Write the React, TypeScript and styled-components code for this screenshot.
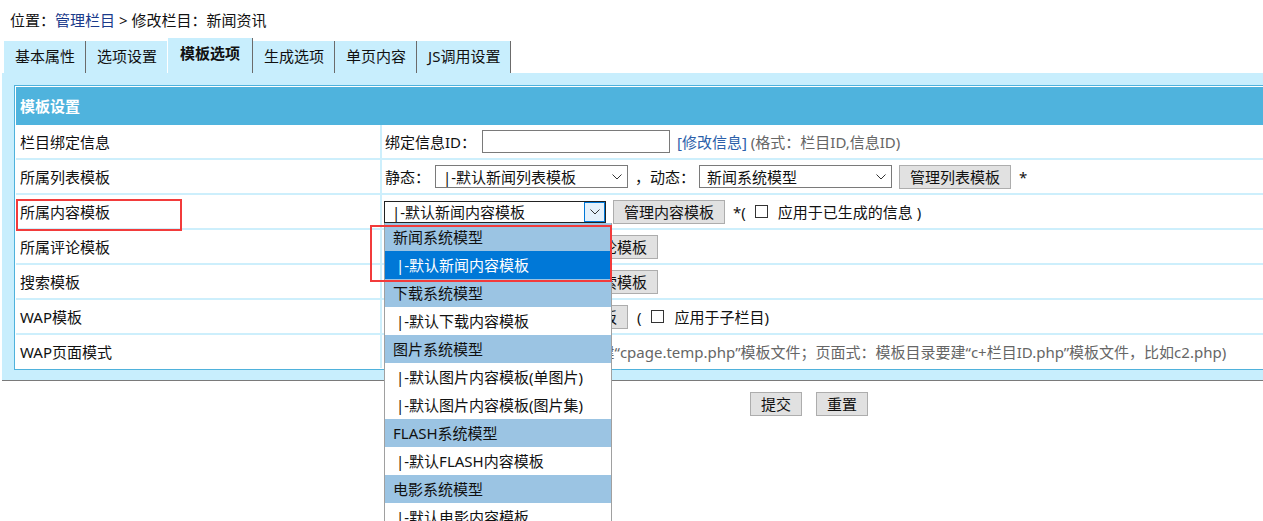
import React from 'react';
import styled, { createGlobalStyle } from 'styled-components';

const GlobalStyle = createGlobalStyle`
  html, body {
    margin: 0;
    padding: 0;
    background: #fff;
    overflow: hidden;
  }
  body {
    font-family: "Noto Sans", "Noto Sans CJK SC", sans-serif;
    font-size: 15px;
    color: #111;
  }
`;

const LIGHT = '#c8eefd';

// Page shell
const Page = styled.div`
  width: 1618px;
  height: 521px;
  overflow: hidden;
`;

const Breadcrumb = styled.div`
  box-sizing: border-box;
  height: 38px;
  padding: 10px 0 0 10px;
  line-height: 20px;
`;

const CrumbLink = styled.a`
  color: #1a3a8a;
  text-decoration: none;
`;

const TabBar = styled.div`
  display: flex;
  align-items: flex-end;
  height: 35px;
  padding-left: 4px;
`;

const Tab = styled.div<{ $active?: boolean }>`
  height: ${p => (p.$active ? 35 : 32)}px;
  line-height: 30px;
  padding: 0 ${p => (p.$active ? 12 : 10)}px;
  background: ${LIGHT};
  border-left: 1px solid ${p => (p.$active ? '#fff' : 'transparent')};
  border-right: 1px solid #6b6b6b;
  margin-left: ${p => (p.$active ? -1 : 0)}px;
  font-weight: ${p => (p.$active ? 700 : 400)};
  box-sizing: border-box;
  white-space: nowrap;
`;

const Panel = styled.div`
  margin-left: 2px;
  padding: 12px 0 10px 12px;
  background: ${LIGHT};
  border-bottom: 1px solid #7a7a7a;
`;

const Table = styled.div`
  border: 1px solid #4fb2dc;
  background: #fff;
  padding: 1px;
`;

const Header = styled.div`
  height: 38px;
  line-height: 38px;
  padding-left: 4px;
  background: #4fb3dd;
  color: #fff;
  font-weight: 700;
`;

const Row = styled.div<{ $first?: boolean }>`
  display: grid;
  grid-template-columns: 364px 1fr;
  column-gap: 2px;
  height: 33px;
  background: #cdeffc;
  border-top: ${p => (p.$first ? 'none' : '2px solid #cdeffc')};
`;

const LabelCell = styled.div`
  position: relative;
  display: flex;
  align-items: center;
  padding-left: 4px;
  background: #fff;
`;

const ValueCell = styled.div`
  position: relative;
  display: flex;
  align-items: center;
  padding-left: 3px;
  background: #fff;
  white-space: nowrap;
`;

// Form controls
const TextInput = styled.div`
  width: 188px;
  height: 23px;
  margin-left: 6px;
  box-sizing: border-box;
  border: 1px solid #7a7a7a;
  background: #fff;
`;

const SelectWrap = styled.div<{ $ml?: number }>`
  position: relative;
  margin-left: ${p => p.$ml ?? 0}px;
`;

const SelectBox = styled.div<{ $w: number; $focused?: boolean }>`
  display: flex;
  align-items: center;
  width: ${p => p.$w}px;
  height: ${p => (p.$focused ? 22 : 23)}px;
  box-sizing: border-box;
  border: 1px solid ${p => (p.$focused ? '#222' : '#7a7a7a')};
  background: #fff;
`;

const SelectText = styled.span`
  flex: 1;
  padding-left: 7px;
  overflow: hidden;
  line-height: 20px;
`;

const Arrow = styled.span<{ $focused?: boolean }>`
  display: flex;
  align-items: center;
  justify-content: center;
  width: 21px;
  height: 100%;
  box-sizing: border-box;
  border: 1px solid ${p => (p.$focused ? '#0078d7' : 'transparent')};
  background: ${p => (p.$focused ? '#e5f1fb' : 'transparent')};
`;

const Button = styled.button<{ $ml?: number }>`
  height: 24px;
  margin-left: ${p => p.$ml ?? 0}px;
  padding: 0 10px;
  box-sizing: border-box;
  border: 1px solid #adadad;
  background: #e1e1e1;
  color: #111;
  font: inherit;
  line-height: 22px;
`;

const Check = styled.span<{ $ml: number }>`
  display: inline-block;
  width: 13px;
  height: 13px;
  margin-left: ${p => p.$ml}px;
  box-sizing: border-box;
  border: 1px solid #333;
  background: #fff;
`;

const Txt = styled.span<{ $ml?: number }>`
  margin-left: ${p => p.$ml ?? 0}px;
`;

const EditLink = styled.a`
  margin-left: 7px;
  color: #2b5faa;
  text-decoration: none;
`;

const Hint = styled.span`
  color: #666;
`;

// Open dropdown list
const Dropdown = styled.div`
  position: absolute;
  top: 100%;
  left: 0;
  z-index: 5;
  width: 228px;
  box-sizing: border-box;
  border: 1px solid #a0a0a0;
  border-top: none;
  background: #fff;
`;

const DropItem = styled.div<{ $kind: 'group' | 'option' | 'selected' }>`
  height: 28px;
  line-height: 28px;
  padding-left: ${p => (p.$kind === 'group' ? 8 : 11)}px;
  background: ${p =>
    p.$kind === 'group' ? '#9bc4e3' : p.$kind === 'selected' ? '#0078d7' : '#fff'};
  color: ${p => (p.$kind === 'selected' ? '#fff' : '#111')};
  white-space: nowrap;
`;

// Red annotation frames
const LabelMark = styled.div`
  position: absolute;
  left: 0;
  top: 4px;
  width: 166px;
  height: 32px;
  box-sizing: border-box;
  border: 2px solid #f23b3b;
  z-index: 6;
  pointer-events: none;
`;

const ListMark = styled.div`
  position: absolute;
  left: -14px;
  top: 24px;
  width: 242px;
  height: 57px;
  box-sizing: border-box;
  border: 2px solid #f23b3b;
  z-index: 6;
  pointer-events: none;
`;

const Footer = styled.div`
  display: flex;
  justify-content: center;
  gap: 14px;
  padding-top: 11px;
`;

const Chevron = () => (
  <svg width="10" height="6" viewBox="0 0 10 6">
    <polyline points="0.5,0.5 5,5 9.5,0.5" fill="none" stroke="#333" strokeWidth="1" />
  </svg>
);

const Select: React.FC<{ w: number; text: string; focused?: boolean }> = ({ w, text, focused }) => (
  <SelectBox $w={w} $focused={focused}>
    <SelectText>{text}</SelectText>
    <Arrow $focused={focused}>
      <Chevron />
    </Arrow>
  </SelectBox>
);

const tabs = ['基本属性', '选项设置', '模板选项', '生成选项', '单页内容', 'JS调用设置'];

const listItems: { kind: 'group' | 'option' | 'selected'; text: string }[] = [
  { kind: 'group', text: '新闻系统模型' },
  { kind: 'selected', text: '|-默认新闻内容模板' },
  { kind: 'group', text: '下载系统模型' },
  { kind: 'option', text: '|-默认下载内容模板' },
  { kind: 'group', text: '图片系统模型' },
  { kind: 'option', text: '|-默认图片内容模板(单图片)' },
  { kind: 'option', text: '|-默认图片内容模板(图片集)' },
  { kind: 'group', text: 'FLASH系统模型' },
  { kind: 'option', text: '|-默认FLASH内容模板' },
  { kind: 'group', text: '电影系统模型' },
  { kind: 'option', text: '|-默认电影内容模板' },
];

const App: React.FC = () => {
  return (
    <Page>
      <GlobalStyle />
      <Breadcrumb>
        位置：<CrumbLink href="#">管理栏目</CrumbLink> &gt; 修改栏目：新闻资讯
      </Breadcrumb>
      <TabBar>
        {tabs.map(t => (
          <Tab key={t} $active={t === '模板选项'}>
            {t}
          </Tab>
        ))}
      </TabBar>

      <Panel>
        <Table>
          <Header>模板设置</Header>

          <Row $first>
            <LabelCell>栏目绑定信息</LabelCell>
            <ValueCell>
              绑定信息ID：
              <TextInput />
              <EditLink href="#">[修改信息]</EditLink>
              <Hint>&nbsp;(格式：栏目ID,信息ID)</Hint>
            </ValueCell>
          </Row>

          <Row>
            <LabelCell>所属列表模板</LabelCell>
            <ValueCell>
              静态：
              <SelectWrap $ml={5}>
                <Select w={193} text="|-默认新闻列表模板" />
              </SelectWrap>
              <Txt $ml={7}>，动态：</Txt>
              <SelectWrap $ml={4}>
                <Select w={193} text="新闻系统模型" />
              </SelectWrap>
              <Button $ml={7}>管理列表模板</Button>
              <Txt $ml={8}>*</Txt>
            </ValueCell>
          </Row>

          <Row>
            <LabelCell>
              所属内容模板
              <LabelMark />
            </LabelCell>
            <ValueCell>
              <SelectWrap $ml={-1}>
                <Select w={222} text="|-默认新闻内容模板" focused />
                <Dropdown>
                  {listItems.map((it, i) => (
                    <DropItem key={i} $kind={it.kind}>
                      {it.text}
                    </DropItem>
                  ))}
                </Dropdown>
                <ListMark />
              </SelectWrap>
              <Button $ml={7}>管理内容模板</Button>
              <Txt $ml={8}>*(</Txt>
              <Check $ml={9} />
              <Txt $ml={10}>应用于已生成的信息 )</Txt>
            </ValueCell>
          </Row>

          <Row>
            <LabelCell>所属评论模板</LabelCell>
            <ValueCell>
              <Select w={154} text="|-默认评论模板" />
              <Button $ml={7}>管理评论模板</Button>
            </ValueCell>
          </Row>

          <Row>
            <LabelCell>搜索模板</LabelCell>
            <ValueCell>
              <Select w={154} text="|-默认搜索模板" />
              <Button $ml={7}>管理搜索模板</Button>
            </ValueCell>
          </Row>

          <Row>
            <LabelCell>WAP模板</LabelCell>
            <ValueCell>
              <Select w={154} text="|-默认WAP模板" />
              <Button $ml={7}>管理模板</Button>
              <Txt $ml={9}>(</Txt>
              <Check $ml={9} />
              <Txt $ml={11}>应用于子栏目)</Txt>
            </ValueCell>
          </Row>

          <Row>
            <LabelCell>WAP页面模式</LabelCell>
            <ValueCell>
              <Hint>
                (列表式：栏目页模板目录下要新建“cpage.temp.php”模板文件；页面式：模板目录要建“c+栏目ID.php”模板文件，比如c2.php)
              </Hint>
            </ValueCell>
          </Row>
        </Table>
      </Panel>

      <Footer>
        <Button>提交</Button>
        <Button>重置</Button>
      </Footer>
    </Page>
  );
};

export default App;
